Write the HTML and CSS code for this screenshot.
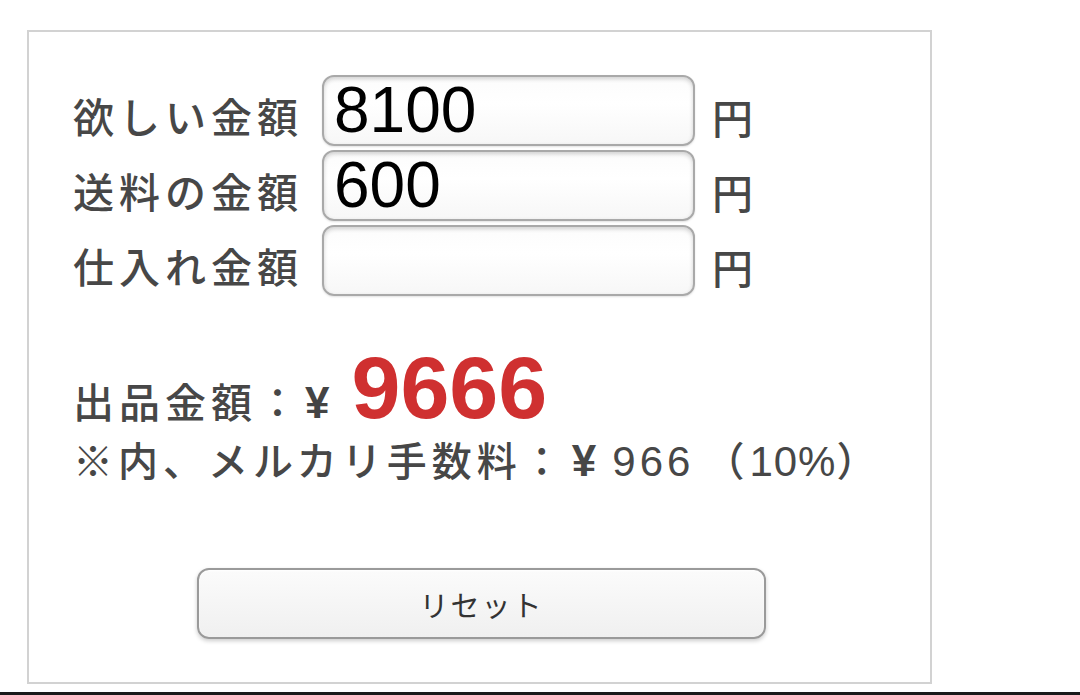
FILE: index.html
```html
<!DOCTYPE html>
<html lang="ja">
<head>
<meta charset="utf-8">
<link rel="stylesheet" href="styles.css">
</head>
<body>
<div class="page">
  <div class="calc">
    <div class="rows">
      <div class="row">
        <span class="label">欲しい金額</span>
        <div class="field">8100</div>
        <span class="unit">円</span>
      </div>
      <div class="row">
        <span class="label">送料の金額</span>
        <div class="field">600</div>
        <span class="unit">円</span>
      </div>
      <div class="row">
        <span class="label">仕入れ金額</span>
        <div class="field"></div>
        <span class="unit">円</span>
      </div>
    </div>
    <div class="result">
      <div class="price-line"><span class="price-label">出品金額：</span><span class="yen">¥</span><span class="price">9666</span></div>
      <div class="fee-line">※内、メルカリ手数料：<span class="yen-small">¥</span><span class="num fee-num">966</span>（<span class="num pct">10%</span>）</div>
    </div>
    <div class="actions">
      <div class="reset">リセット</div>
    </div>
  </div>
</div>
<div class="bottom-bar"></div>
</body>
</html>
```

FILE: styles.css
```css
html, body {
  margin: 0;
  padding: 0;
  background: #ffffff;
}
body {
  width: 1080px;
  height: 695px;
  overflow: hidden;
  font-family: "Noto Sans CJK JP", "Liberation Sans", sans-serif;
  font-weight: 500;
  color: #474747;
}
.page {
  padding: 30px 0 0 27px;
  height: 654px;
}
.calc {
  box-sizing: border-box;
  width: 905px;
  height: 654px;
  border: 2px solid #d2d2d2;
  padding: 43px 0 0 44px;
  display: flex;
  flex-direction: column;
}
.rows {
  display: flex;
  flex-direction: column;
  gap: 4px;
}
.row {
  display: flex;
  align-items: center;
  height: 71px;
}
.label {
  width: 249px;
  font-size: 41px;
  letter-spacing: 5px;
  line-height: 1;
  padding-top: 10px;
  white-space: nowrap;
}
.field {
  box-sizing: border-box;
  width: 373px;
  height: 71px;
  border: 2px solid #a9a9a9;
  border-radius: 12px;
  background: linear-gradient(#fcfcfc, #ffffff 40%, #f7f7f7);
  box-shadow: inset 0 2px 4px rgba(0,0,0,0.18), 0 1px 2px rgba(0,0,0,0.12);
  font-family: "Liberation Sans", Arial, sans-serif;
  font-weight: normal;
  font-size: 64px;
  color: #000000;
  line-height: 66px;
  padding-left: 10px;
}
.unit {
  margin-left: 17px;
  font-size: 41px;
  line-height: 1;
  padding-top: 12px;
}
.result {
  margin-top: 48px;
}
.price-line {
  display: flex;
  align-items: baseline;
  height: 82px;
}
.price-label {
  font-size: 41px;
  letter-spacing: 5px;
}
.yen {
  font-family: "Liberation Sans", Arial, sans-serif;
  font-weight: bold;
  font-size: 44px;
  color: #444444;
  margin-left: 2px;
}
.price {
  font-family: "Liberation Sans", Arial, sans-serif;
  font-weight: bold;
  font-size: 88px;
  color: #cf3030;
  margin-left: 22px;
  line-height: 1;
}
.fee-line {
  font-size: 40px;
  letter-spacing: 5px;
  line-height: 1;
  margin-top: 13px;
  white-space: nowrap;
}
.yen-small {
  font-family: "Liberation Sans", Arial, sans-serif;
  font-weight: bold;
  font-size: 44px;
  letter-spacing: 0;
  margin-left: 5px;
  margin-right: 16px;
}
.num {
  font-family: "Liberation Sans", Arial, sans-serif;
  font-weight: normal;
  font-size: 42px;
}
.fee-num {
  letter-spacing: 4px;
  margin-right: 10px;
}
.pct {
  letter-spacing: 1px;
}
.actions {
  margin-top: 85px;
  padding-left: 124px;
}
.reset {
  box-sizing: border-box;
  width: 569px;
  height: 71px;
  border: 2px solid #9a9a9a;
  border-radius: 12px;
  background: linear-gradient(#fbfbfb, #f0f0f0);
  box-shadow: 0 2px 4px rgba(0,0,0,0.2), inset 0 1px 2px rgba(255,255,255,0.9);
  display: flex;
  align-items: center;
  justify-content: center;
  font-size: 29px;
  font-weight: normal;
  letter-spacing: 2px;
  color: #333333;
}
.bottom-bar {
  margin-top: 8px;
  height: 3px;
  background: #1a1a1a;
}
```
